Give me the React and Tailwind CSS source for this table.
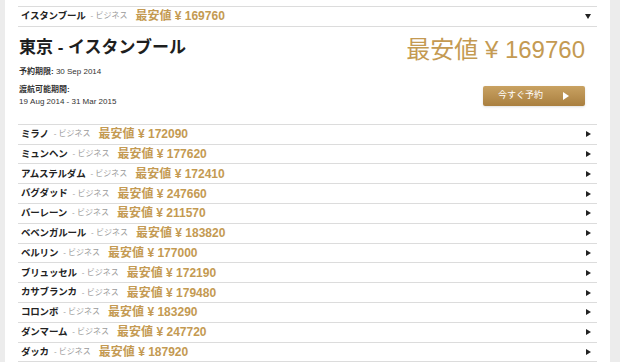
import React from "react";

const rows = [
  { city: "ミラノ", price: "172090" },
  { city: "ミュンヘン", price: "177620" },
  { city: "アムステルダム", price: "172410" },
  { city: "バグダッド", price: "247660" },
  { city: "バーレーン", price: "211570" },
  { city: "ベベンガルール", price: "183820" },
  { city: "ベルリン", price: "177000" },
  { city: "ブリュッセル", price: "172190" },
  { city: "カサブランカ", price: "179480" },
  { city: "コロンボ", price: "183290" },
  { city: "ダンマーム", price: "247720" },
  { city: "ダッカ", price: "187920" },
];

const font = { fontFamily: '"Liberation Sans", "Noto Sans CJK JP", sans-serif' };

function RouteRow({ city, price, open }) {
  return (
    <div className="flex items-center h-[19.8px] border-b border-[#dcdcdc] pl-[3px] pr-[6px]">
      <span className="text-[9.5px] font-bold text-[#222] tracking-[-0.2px]">{city}</span>
      <span className="ml-[5px] text-[8px] text-[#9a9a9a]">- ビジネス</span>
      <span className="ml-[8px] text-[12px] font-bold text-[#c49a52]">最安値 ¥ {price}</span>
      <span className="ml-auto">
        {open ? (
          <svg width="6" height="5" viewBox="0 0 6 5"><path d="M0 0h6L3 5z" fill="#222" /></svg>
        ) : (
          <svg width="5" height="6" viewBox="0 0 5 6"><path d="M0 0l5 3-5 3z" fill="#222" /></svg>
        )}
      </span>
    </div>
  );
}

export default function App() {
  return (
    <div className="flex w-[620px] h-[362px] overflow-hidden bg-[#ececec]" style={font}>
      <div className="w-[5px] shrink-0" />
      <div className="w-[605px] bg-white pt-[6px] pl-[13px] pr-[13px]">
        <div className="border-t border-[#dcdcdc]">
          <RouteRow city="イスタンブール" price="169760" open />
        </div>

        <div className="flex justify-between h-[98px] border-b border-[#dcdcdc] pl-[1px] pr-[12px]">
          <div className="pt-[9px]">
            <h1 className="text-[17px] font-bold text-[#1e1e1e] leading-[24px]">東京 - イスタンブール</h1>
            <p className="mt-[6px] text-[8px] text-[#333] leading-[12px]">
              <span className="font-bold">予約期限:</span> 30 Sep 2014
            </p>
            <p className="mt-[6px] text-[8px] text-[#333] leading-[12px]">
              <span className="font-bold">渡航可能期間:</span>
              <br />
              19 Aug 2014 - 31 Mar 2015
            </p>
          </div>
          <div className="flex flex-col items-end pt-[8px]">
            <div className="text-[24px] text-[#c49a52] leading-[30px]">最安値 ¥ 169760</div>
            <button className="mt-[21px] flex items-center w-[102px] h-[20px] rounded-[2px] bg-gradient-to-b from-[#c9a262] to-[#a97f3f] text-white text-[9px] pl-[15px] shadow-sm">
              今すぐ予約
              <svg className="ml-[20px]" width="6" height="8" viewBox="0 0 6 8"><path d="M0 0l6 4-6 4z" fill="#fff" /></svg>
            </button>
          </div>
        </div>

        {rows.map((r) => (
          <RouteRow key={r.city} city={r.city} price={r.price} />
        ))}
      </div>
    </div>
  );
}
